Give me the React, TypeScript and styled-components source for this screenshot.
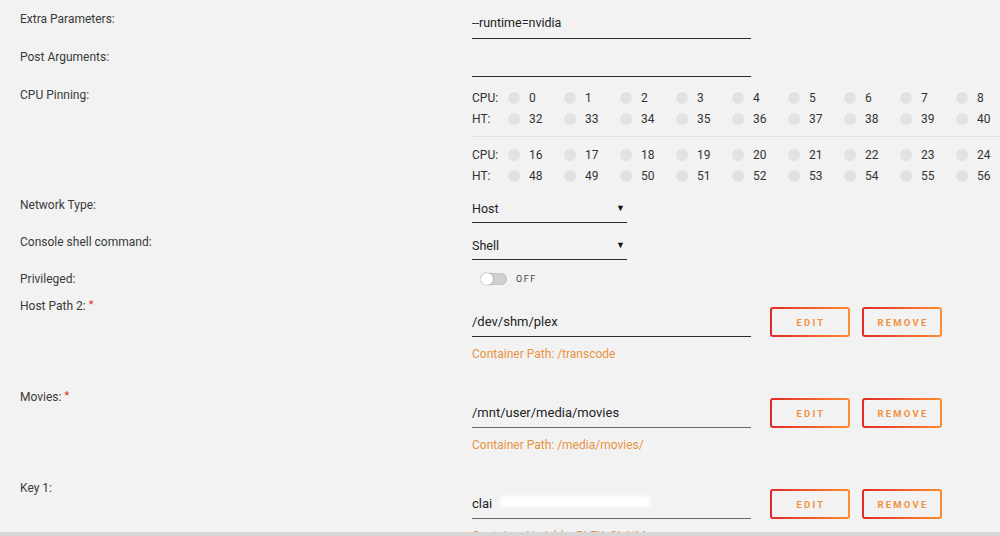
import React from "react";
import styled, { createGlobalStyle } from "styled-components";

const GlobalStyle = createGlobalStyle`
  html, body {
    margin: 0;
    padding: 0;
    background: #f2f2f2;
    overflow: hidden;
  }
  body {
    font-family: Roboto, "Noto Sans", sans-serif;
    font-size: 12px;
    color: #3a3a3a;
  }
`;

const Page = styled.div`
  padding-top: 11px;
`;

const Row = styled.div<{ $h: number }>`
  display: grid;
  grid-template-columns: 452px 1fr;
  padding-left: 20px;
  height: ${(p) => p.$h}px;
`;

const Label = styled.div`
  line-height: 16px;
  color: #3a3a3a;
`;

const Req = styled.span`
  color: #e22828;
  font-size: 11px;
  margin-left: 3px;
  position: relative;
  top: -2px;
`;

const TextInput = styled.div<{ $w: number; $h: number; $pt: number; $line?: string; $size?: number }>`
  box-sizing: border-box;
  width: ${(p) => p.$w}px;
  height: ${(p) => p.$h}px;
  padding-top: ${(p) => p.$pt}px;
  line-height: 16px;
  font-size: ${(p) => p.$size ?? 12}px;
  color: #222;
  border-bottom: 1px solid ${(p) => p.$line ?? "#2a2a2a"};
  position: relative;
`;

const Select = styled(TextInput)`
  display: flex;
  justify-content: space-between;
  padding-right: 2px;
  font-size: 12.5px;
`;

const Caret = styled.span`
  font-size: 9px;
  color: #111;
  line-height: 14px;
`;

const CpuBlock = styled.div`
  display: flex;
  flex-direction: column;
`;

const CpuGrid = styled.div`
  display: grid;
  grid-template-columns: 36px repeat(9, 56px);
  grid-auto-rows: 21px;
  align-items: center;
`;

const Separator = styled.div`
  height: 1px;
  background: #e0e0e0;
  margin: 7px 0 7px;
  margin-right: -20px;
`;

const CpuLabel = styled.span`
  color: #333;
`;

const Cell = styled.label`
  display: flex;
  align-items: center;
  gap: 9px;
  color: #333;
`;

const Dot = styled.span`
  width: 12px;
  height: 12px;
  border-radius: 50%;
  background: #e2e2e2;
`;

const SwitchRow = styled.div`
  display: flex;
  align-items: center;
  gap: 9px;
  padding-left: 9px;
  height: 15px;
`;

const Track = styled.span`
  position: relative;
  width: 26px;
  height: 12px;
  border-radius: 6px;
  background: #cfcfcf;
  box-shadow: inset 0 0 0 1px #c4c4c4;
`;

const Knob = styled.span`
  position: absolute;
  left: 0;
  top: 0;
  width: 12px;
  height: 12px;
  border-radius: 50%;
  background: #fff;
  box-shadow: 0 0 1px 1px rgba(0, 0, 0, 0.12);
`;

const SwitchText = styled.span`
  font-size: 9px;
  letter-spacing: 1.5px;
  color: #444;
`;

const PathValue = styled.div`
  padding-top: 9px;
  display: flex;
  flex-direction: column;
`;

const PathLine = styled.div`
  display: flex;
  align-items: flex-end;
  height: 30px;
`;

const Buttons = styled.div`
  display: flex;
  gap: 12px;
  margin-left: 19px;
`;

const GradButton = styled.button`
  box-sizing: border-box;
  width: 80px;
  height: 30px;
  border: 2px solid transparent;
  border-radius: 3px;
  background:
    linear-gradient(#f2f2f2, #f2f2f2) padding-box,
    linear-gradient(90deg, #e22828 0%, #ff8c2f 100%) border-box;
  color: #f0913f;
  font-family: Roboto, sans-serif;
  font-size: 9.5px;
  font-weight: 700;
  letter-spacing: 2.2px;
  padding: 0 0 0 2px;
  cursor: pointer;
`;

const ContainerPath = styled.div`
  margin-top: 9px;
  line-height: 16px;
  color: #e8933f;
`;

const Redact = styled.span`
  position: absolute;
  left: 28px;
  top: 6px;
  width: 150px;
  height: 11px;
  background: #fff;
  filter: blur(1.5px);
  border-radius: 4px;
`;

const ScrollBar = styled.div`
  position: fixed;
  left: 0;
  right: 0;
  bottom: 0;
  height: 4px;
  background: #d6d6d6;
`;

const groups = [
  { cpu: [0, 1, 2, 3, 4, 5, 6, 7, 8], ht: [32, 33, 34, 35, 36, 37, 38, 39, 40] },
  { cpu: [16, 17, 18, 19, 20, 21, 22, 23, 24], ht: [48, 49, 50, 51, 52, 53, 54, 55, 56] },
];

const paths = [
  { label: "Host Path 2:", required: true, value: "/dev/shm/plex", note: "Container Path: /transcode", line: "#2a2a2a" },
  { label: "Movies:", required: true, value: "/mnt/user/media/movies", note: "Container Path: /media/movies/", line: "#666" },
  { label: "Key 1:", required: false, value: "clai", note: "Container Variable: PLEX_CLAIM", line: "#666", redact: true },
];

function CpuRows({ cpu, ht }: { cpu: number[]; ht: number[] }) {
  return (
    <CpuGrid>
      <CpuLabel>CPU:</CpuLabel>
      {cpu.map((n) => (
        <Cell key={n}>
          <Dot />
          {n}
        </Cell>
      ))}
      <CpuLabel>HT:</CpuLabel>
      {ht.map((n) => (
        <Cell key={n}>
          <Dot />
          {n}
        </Cell>
      ))}
    </CpuGrid>
  );
}

export default function App() {
  return (
    <>
      <GlobalStyle />
      <Page>
        <Row $h={38}>
          <Label>Extra Parameters:</Label>
          <TextInput $w={279} $h={28} $pt={4} $size={12.5}>--runtime=nvidia</TextInput>
        </Row>
        <Row $h={38}>
          <Label>Post Arguments:</Label>
          <TextInput $w={279} $h={28} $pt={4} />
        </Row>
        <Row $h={110}>
          <Label>CPU Pinning:</Label>
          <CpuBlock>
            <CpuRows {...groups[0]} />
            <Separator />
            <CpuRows {...groups[1]} />
          </CpuBlock>
        </Row>
        <Row $h={37}>
          <Label>Network Type:</Label>
          <Select $w={155} $h={26} $pt={4}>
            Host<Caret>▼</Caret>
          </Select>
        </Row>
        <Row $h={37}>
          <Label>Console shell command:</Label>
          <Select $w={155} $h={26} $pt={4}>
            Shell<Caret>▼</Caret>
          </Select>
        </Row>
        <Row $h={27}>
          <Label>Privileged:</Label>
          <SwitchRow>
            <Track>
              <Knob />
            </Track>
            <SwitchText>OFF</SwitchText>
          </SwitchRow>
        </Row>
        {paths.map((p) => (
          <Row $h={91} key={p.label}>
            <Label>
              {p.label}
              {p.required && <Req>*</Req>}
            </Label>
            <PathValue>
              <PathLine>
                <TextInput $w={279} $h={29} $pt={6} $size={13} $line={p.line}>
                  {p.value}
                  {p.redact && <Redact />}
                </TextInput>
                <Buttons>
                  <GradButton>EDIT</GradButton>
                  <GradButton>REMOVE</GradButton>
                </Buttons>
              </PathLine>
              <ContainerPath>{p.note}</ContainerPath>
            </PathValue>
          </Row>
        ))}
      </Page>
      <ScrollBar />
    </>
  );
}
